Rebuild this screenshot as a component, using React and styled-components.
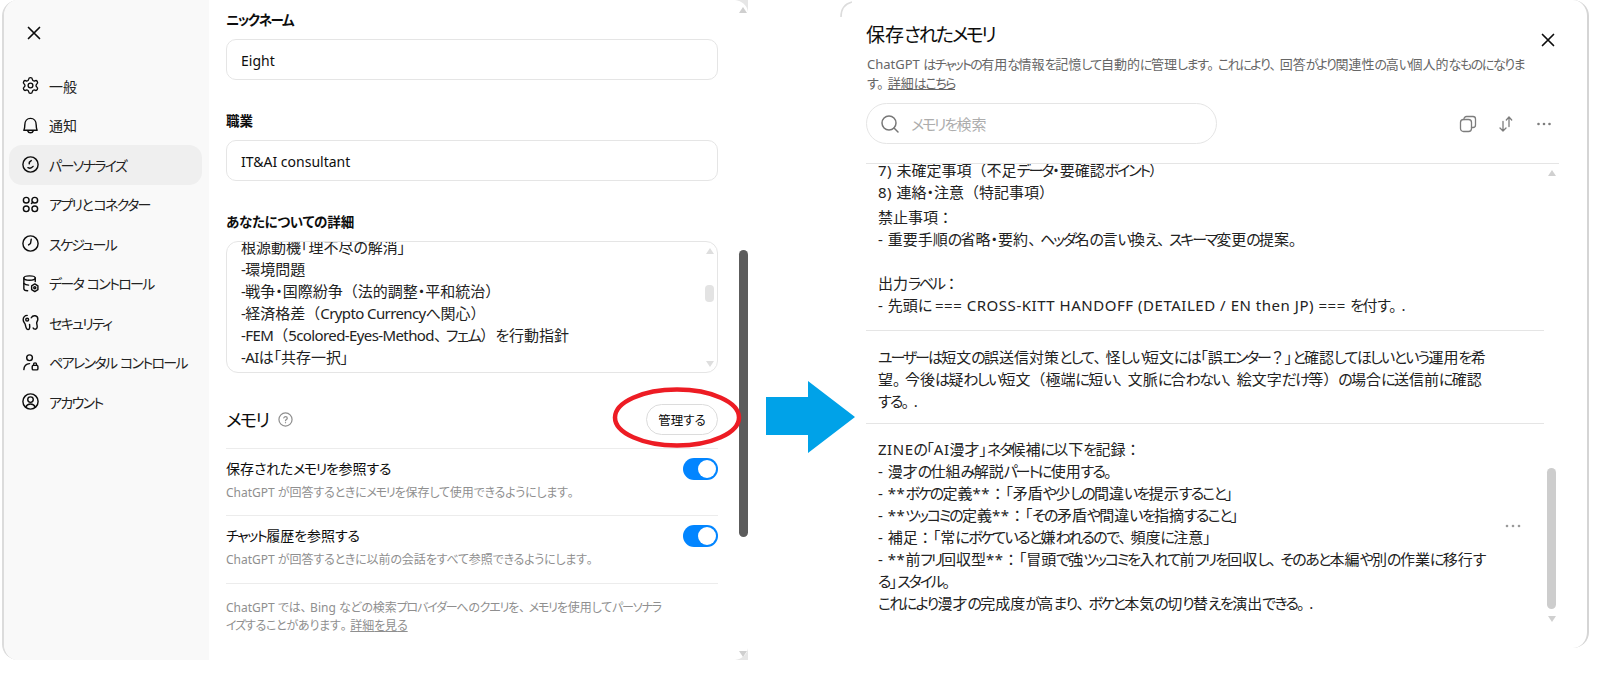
import React from "react";
import styled, { createGlobalStyle } from "styled-components";
import { Settings } from "lucide-react";

const Global = createGlobalStyle`
  html, body { margin: 0; padding: 0; background: #fff; }
  body {
    font-family: "Noto Sans", "Noto Sans CJK JP", sans-serif;
    font-feature-settings: "palt";
    color: #0d0d0d;
    overflow: hidden;
    --kata: -0.1em;
    --hira: -0.02em;
    --latin: 0;
  }
  * { box-sizing: border-box; }
`;

const Kata = styled.span`
  letter-spacing: var(--kata);
`;
const Hira = styled.span`
  letter-spacing: var(--hira);
`;
const Latin = styled.span`
  letter-spacing: var(--latin);
`;
const Punct = styled.span`
  font-feature-settings: normal;
`;
const Comma = styled(Punct)`
  letter-spacing: -0.2em;
`;

const Rich = ({ children }) =>
  children
    .split(/([\u30A0-\u30FA\u30FC-\u30FF]+|[\u3040-\u309F]+|[（）：？]+|[、。]+|[\x20-\x7E]+)/)
    .filter(Boolean)
    .map((run, i) => {
      if (/^[\u30A0-\u30FA\u30FC-\u30FF]/.test(run)) return <Kata key={i}>{run}</Kata>;
      if (/^[\u3040-\u309F]/.test(run)) return <Hira key={i}>{run}</Hira>;
      if (/^[（）：？]/.test(run)) return <Punct key={i}>{run}</Punct>;
      if (/^[、。]/.test(run)) return <Comma key={i}>{run}</Comma>;
      if (/^[\x20-\x7E]/.test(run)) return <Latin key={i}>{run}</Latin>;
      return <span key={i}>{run}</span>;
    });

const Line = styled.div`
  min-height: 22px;
  white-space: pre;
`;

const Lines = ({ children }) =>
  children.split("\n").map((line, i) => (
    <Line key={i}>
      <Rich>{line}</Rich>
    </Line>
  ));

const Page = styled.div`
  position: relative;
  display: flex;
  align-items: flex-start;
  width: 1600px;
  height: 700px;
  padding-left: 2px;
`;

const SettingsPanel = styled.section`
  display: flex;
  width: 746px;
  height: 660px;
  border-left: 2px solid #dcdcdc;
  border-radius: 16px 0 0 16px;
  overflow: hidden;
`;

const Sidebar = styled.nav`
  width: 205px;
  flex: none;
  background: #f9f9f9;
  padding: 24px 7px 0 5px;
  --kata: -0.12em;
`;

const CloseButton = styled.svg`
  display: block;
  width: 18px;
  height: 18px;
  fill: none;
  stroke: #0d0d0d;
  stroke-width: 1.7;
  stroke-linecap: round;
  flex: none;
`;

const SidebarClose = styled(CloseButton)`
  margin: 0 0 24px 16px;
`;

const NavRow = styled.div`
  display: flex;
  align-items: center;
  gap: 9px;
  height: 39.5px;
  padding-left: 12px;
  border-radius: 13px;
  font-size: 14px;
  white-space: pre;
  color: #222;
  background: ${(p) => (p.$active ? "#efefef" : "transparent")};
`;

const NavIcon = styled.svg`
  width: 19px;
  height: 19px;
  flex: none;
  fill: none;
  stroke: #0d0d0d;
  stroke-width: 1.5;
  stroke-linecap: round;
  stroke-linejoin: round;
`;

const Main = styled.main`
  flex: 1;
  padding: 10px 20px 0 17px;
  background: #fff;
  min-width: 0;
`;

const Label = styled.div`
  font-size: 13.5px;
  font-weight: 700;
  line-height: 20px;
  margin-bottom: 9px;
`;

const Field = styled.div`
  height: 41px;
  border: 1px solid #e5e5e5;
  border-radius: 10px;
  padding: 0 14px;
  font-size: 14px;
  line-height: 41px;
  margin-bottom: 31px;
`;

const TextArea = styled.div`
  display: flex;
  justify-content: space-between;
  height: 132px;
  border: 1px solid #e5e5e5;
  border-radius: 12px;
  padding: 0 3px 0 14px;
  overflow: hidden;
  margin-bottom: 31px;
`;

const TextAreaBody = styled.div`
  margin-top: -6px;
  font-size: 15px;
  line-height: 22px;
  color: #222;
  --latin: -0.04em;
`;

const TextScroll = styled.div`
  width: 9px;
  display: flex;
  flex-direction: column;
  align-items: center;
  padding: 6px 0 5px;
`;

const ArrowUp = styled.div`
  width: 0;
  height: 0;
  border-left: 4.5px solid transparent;
  border-right: 4.5px solid transparent;
  border-bottom: 6px solid ${(p) => p.$color || "#dedede"};
`;

const ArrowDown = styled(ArrowUp)`
  border-bottom: 0;
  border-top: 6px solid ${(p) => p.$color || "#dedede"};
`;

const SmallThumb = styled.div`
  width: 9px;
  height: 17px;
  margin: 31px 0 auto;
  background: #e3e3e3;
  border-radius: 4px;
`;

const MemoryHead = styled.div`
  display: flex;
  align-items: center;
  height: 31px;
  margin-bottom: 13px;
`;

const MemoryTitle = styled.h2`
  margin: 0;
  font-size: 18px;
  font-weight: 400;
  line-height: 26px;
`;

const HelpIcon = styled.svg`
  width: 15px;
  height: 15px;
  margin-left: 10px;
  fill: none;
  stroke: #8f8f8f;
  stroke-width: 1.3;
  stroke-linecap: round;
`;

const ManageButton = styled.button`
  margin-left: auto;
  width: 72px;
  height: 31px;
  padding: 0;
  border: 1px solid #dcdcdc;
  border-radius: 16px;
  background: #fff;
  color: #0d0d0d;
  font: inherit;
  font-size: 12.5px;
  font-feature-settings: "palt";
`;

const SettingRow = styled.div`
  display: flex;
  justify-content: space-between;
  align-items: flex-start;
  height: 67.3px;
  padding-top: 9px;
  border-top: 1px solid #ececec;
`;

const RowTitle = styled.div`
  font-size: 14px;
  line-height: 20px;
  margin-top: 1px;
  margin-bottom: 5px;
`;

const RowSub = styled.div`
  font-size: 12px;
  line-height: 18px;
  color: #8f8f8f;
`;

const Toggle = styled.div`
  display: flex;
  justify-content: flex-end;
  align-items: center;
  width: 35px;
  height: 22px;
  padding: 2px;
  border-radius: 11px;
  background: #0285ff;
`;

const Knob = styled.div`
  width: 18px;
  height: 18px;
  border-radius: 50%;
  background: #fff;
`;

const Footer = styled.div`
  border-top: 1px solid #ececec;
  padding-top: 15px;
  font-size: 12px;
  line-height: 18px;
  color: #8f8f8f;
`;

const FooterLine = styled.div`
  white-space: pre;
`;

const Link = styled.span`
  text-decoration: underline;
`;

const PageScroll = styled.div`
  position: relative;
  isolation: isolate;
  width: 10px;
  flex: none;
  background: #fff;
  display: flex;
  flex-direction: column;
  align-items: center;
  padding-top: 7px;
`;

const PageThumb = styled.div`
  width: 9px;
  height: 287px;
  margin-top: 237px;
  background: #5c5c5c;
  border-radius: 5px;
`;

const PageArrowDown = styled(ArrowDown)`
  margin-top: auto;
  margin-bottom: 3px;
`;

const ScrollCorner = styled.svg`
  position: absolute;
  z-index: -1;
  right: 0;
  width: 13px;
  height: 12px;
  fill: #e6e6e6;
  top: ${(p) => (p.$bottom ? "auto" : "0")};
  bottom: ${(p) => (p.$bottom ? "0" : "auto")};
`;

const MemoryPanel = styled.section`
  position: relative;
  width: 749px;
  height: 648px;
  margin-left: 92px;
  padding: 22px 28px 0 26px;
  border-right: 2px solid #d5d5d5;
  border-radius: 0 16px 16px 0;
  overflow: hidden;
  --kata: -0.14em;
  --hira: -0.11em;
`;

const CornerMark = styled.svg`
  position: absolute;
  left: 0;
  top: 1px;
  width: 12px;
  height: 16px;
  fill: none;
  stroke: #dcdcdc;
  stroke-width: 1.6;
`;

const TitleRow = styled.div`
  display: flex;
  justify-content: space-between;
  align-items: flex-start;
  padding-right: 2px;
`;

const Title = styled.h1`
  margin: 0;
  font-size: 19px;
  font-weight: 400;
  line-height: 26px;
`;

const PanelClose = styled(CloseButton)`
  margin-top: 9px;
`;

const Lead = styled.div`
  margin: 6px 0 11px;
  font-size: 13px;
  line-height: 18.5px;
  color: #666;
  padding-left: 1px;
`;

const LeadLine = styled.div`
  white-space: pre;
`;

const Toolbar = styled.div`
  display: flex;
  align-items: center;
  height: 41px;
  margin-bottom: 19px;
  padding-right: 6px;
`;

const SearchBox = styled.div`
  display: flex;
  align-items: center;
  gap: 11px;
  width: 351px;
  height: 41px;
  padding-left: 13px;
  border: 1px solid #e5e5e5;
  border-radius: 21px;
  font-size: 15px;
  color: #adadad;
`;

const SearchIcon = styled.svg`
  width: 20px;
  height: 20px;
  fill: none;
  stroke: #777;
  stroke-width: 1.5;
  stroke-linecap: round;
`;

const ToolIcons = styled.div`
  margin-left: auto;
  display: flex;
  align-items: center;
  gap: 20px;
  color: #777;
`;

const ToolIcon = styled.svg`
  width: 18px;
  height: 18px;
  fill: none;
  stroke: #7d7d7d;
  stroke-width: 1.3;
  stroke-linecap: round;
  stroke-linejoin: round;
`;

const DotsIcon = styled(ToolIcon)`
  stroke: none;
  fill: #7d7d7d;
`;

const MemoryList = styled.div`
  display: flex;
  height: 485px;
  border-top: 1px solid #e5e5e5;
  overflow: hidden;
`;

const Items = styled.div`
  width: 678px;
  flex: none;
  margin-top: -5px;
`;

const Item = styled.div`
  display: flex;
  align-items: center;
  justify-content: space-between;
  padding: ${(p) => p.$pad};
  border-bottom: ${(p) => (p.$last ? "0" : "1px solid #e5e5e5")};
`;

const ItemText = styled.div`
  font-size: 15px;
  line-height: 22px;
  color: #222;
  --latin: 0.035em;
`;

const Para = styled.div`
  margin-top: ${(p) => p.$gap || 0}px;
`;

const ItemDots = styled.svg`
  width: 18px;
  height: 6px;
  margin-right: 22px;
  fill: #9a9a9a;
`;

const ListScroll = styled.div`
  width: 9px;
  margin-left: 3px;
  display: flex;
  flex-direction: column;
  align-items: center;
  padding-top: 6px;
`;

const ListThumb = styled.div`
  width: 9px;
  height: 141px;
  margin-top: 292px;
  background: #cdcdcd;
  border-radius: 5px;
`;

const ListArrowDown = styled(ArrowDown)`
  margin-top: 7px;
`;

const Ring = styled.svg`
  position: absolute;
  left: 612px;
  top: 386px;
  width: 130px;
  height: 63px;
  fill: none;
  stroke: #ed1c24;
  stroke-width: 4.5;
  pointer-events: none;
`;

const BlueArrow = styled.svg`
  position: absolute;
  left: 766px;
  top: 381px;
  width: 90px;
  height: 72px;
  fill: #00a2e8;
`;

const navItems = [
  ["一般", "gear"], ["通知", "bell"], ["パーソナライズ", "smile"], ["アプリとコネクター", "apps"],
  ["スケジュール", "clock"], ["データ コントロール", "data"], ["セキュリティ", "key"],
  ["ペアレンタル コントロール", "parent"], ["アカウント", "user"],
];

const paths = {
  bell: <><path d="M3 15h14c-.8-1.6-1-3.2-1-5.5C16 5.4 13.500 2.500 10 2.500S4 5.400 4 9.500C4 11.800 3.800 13.400 3 15Z" /><path d="M7 15.500c.5 1.500 1.600 2.200 3 2.200s2.500-.7 3-2.200" /></>,
  smile: <><circle cx="10" cy="10" r="8" /><path d="M10.800 5.800C9.300 6.600 8.300 8 8.700 9.300" /><path d="M7.300 13.300c1.800.9 3.900.6 5.400-1.300" /></>,
  apps: <><circle cx="5.500" cy="5.500" r="3" /><circle cx="14.500" cy="5.500" r="3" /><circle cx="5.500" cy="14.500" r="3" /><circle cx="14.500" cy="14.500" r="3" /><path d="M12.500 7.500 11 9" /></>,
  clock: <><circle cx="10" cy="10" r="8" /><path d="M10.800 5.500 10 10 8 11.500" /></>,
  data: <><ellipse cx="9" cy="4.300" rx="6" ry="2.300" /><path d="M3 4.300V15.500C3 16.800 4.500 17.500 7 17.600" /><path d="M15 4.300V8" /><path d="M3 10c1.200 1.200 3 1.700 5 1.700" /><path d="M14.500 10.500l3.300 2v4l-3.300 2-3.300-2v-4Z" /><circle cx="14.500" cy="14.500" r="1.100" /></>,
  key: <><path d="M6.500 2.500C4 2.500 2.300 4.500 2.300 7c0 2.500 1.700 3.500 2.200 5.200.5 2 1 5.300 3 5.300S9.300 14 9 12" /><circle cx="6.500" cy="7" r="1.500" /><path d="M10.800 5c1.800-3.300 6.900-2.800 6.900 1.500 0 2.100-1.500 2.700-1.200 4.500.3 1.900 1.200 3.300.2 5-.9 1.500-3.200 1.300-3.900-.3" /></>,
  parent: <><circle cx="9" cy="5" r="3" /><path d="M3 17.500c.3-3.800 2.500-6.200 6-6.300" /><rect x="11.800" y="13" width="6" height="4.800" rx="1.200" /><path d="M13.200 13v-1a1.600 1.600 0 0 1 3.200 0v1" /></>,
  user: <><circle cx="10" cy="10" r="8" /><circle cx="10" cy="8" r="2.900" /><path d="M5 16c1-2.500 3-3.300 5-3.300s4 .8 5 3.300" /></>,
};

const Nav = ({ icon }) =>
  icon === "gear" ? (
    <Settings size={19} strokeWidth={1.7} color="#0d0d0d" />
  ) : (
    <NavIcon viewBox="0 0 20 20">{paths[icon]}</NavIcon>
  );

const Switch = () => (
  <Toggle>
    <Knob />
  </Toggle>
);

const XMark = ({ as: C }) => (
  <C viewBox="0 0 18 18">
    <path d="M3.500 3.500 14.500 14.500M14.500 3.500 3.500 14.500" />
  </C>
);

export default function App() {
  return (
    <Page>
      <Global />
      <SettingsPanel>
        <Sidebar>
          <XMark as={SidebarClose} />
          {navItems.map(([label, icon]) => (
            <NavRow key={label} $active={icon === "smile"}>
              <Nav icon={icon} />
              <span><Rich>{label}</Rich></span>
            </NavRow>
          ))}
        </Sidebar>
        <Main>
          <Label><Rich>ニックネーム</Rich></Label>
          <Field>Eight</Field>
          <Label>職業</Label>
          <Field>IT&amp;AI consultant</Field>
          <Label><Rich>あなたについての詳細</Rich></Label>
          <TextArea>
            <TextAreaBody>
              <Lines>
                {"根源動機「理不尽の解消」\n-環境問題\n-戦争・国際紛争（法的調整・平和統治）\n-経済格差（Crypto Currencyへ関心）\n-FEM（5colored-Eyes-Method、フェム）を行動指針\n-AIは「共存一択」"}
              </Lines>
            </TextAreaBody>
            <TextScroll>
              <ArrowUp />
              <SmallThumb />
              <ArrowDown />
            </TextScroll>
          </TextArea>
          <MemoryHead>
            <MemoryTitle><Rich>メモリ</Rich></MemoryTitle>
            <HelpIcon viewBox="0 0 16 16">
              <circle cx="8" cy="8" r="7" />
              <path d="M6.200 6.300A1.900 1.900 0 0 1 8 5c1.100 0 1.900.7 1.900 1.600 0 1.300-1.900 1.400-1.900 2.700" />
              <path d="M8 11.300v.1" />
            </HelpIcon>
            <ManageButton>管理する</ManageButton>
          </MemoryHead>
          <SettingRow>
            <div>
              <RowTitle><Rich>保存されたメモリを参照する</Rich></RowTitle>
              <RowSub><Rich>ChatGPT が回答するときにメモリを保存して使用できるようにします。</Rich></RowSub>
            </div>
            <Switch />
          </SettingRow>
          <SettingRow>
            <div>
              <RowTitle><Rich>チャット履歴を参照する</Rich></RowTitle>
              <RowSub><Rich>ChatGPT が回答するときに以前の会話をすべて参照できるようにします。</Rich></RowSub>
            </div>
            <Switch />
          </SettingRow>
          <Footer>
            <FooterLine><Rich>ChatGPT では、Bing などの検索プロバイダーへのクエリを、メモリを使用してパーソナラ</Rich></FooterLine>
            <FooterLine><Rich>イズすることがあります。</Rich><Link><Rich>詳細を見る</Rich></Link></FooterLine>
          </Footer>
        </Main>
        <PageScroll>
          <ScrollCorner viewBox="0 0 13 12"><path d="M0 0H13V12C12 5 7 1 0 0Z" /></ScrollCorner>
          <ArrowUp $color="#cfcfcf" />
          <PageThumb />
          <PageArrowDown $color="#cfcfcf" />
          <ScrollCorner $bottom viewBox="0 0 13 12"><path d="M0 12H13V0C12 7 7 11 0 12Z" /></ScrollCorner>
        </PageScroll>
      </SettingsPanel>

      <MemoryPanel>
        <CornerMark viewBox="0 0 12 16">
          <path d="M1 16C1 8 4 3 12 1" />
        </CornerMark>
        <TitleRow>
          <Title><Rich>保存されたメモリ</Rich></Title>
          <XMark as={PanelClose} />
        </TitleRow>
        <Lead>
          <LeadLine><Rich>ChatGPT はチャットの有用な情報を記憶して自動的に管理します。これにより、回答がより関連性の高い個人的なものになりま</Rich></LeadLine>
          <LeadLine><Rich>す。</Rich><Link><Rich>詳細はこちら</Rich></Link></LeadLine>
        </Lead>
        <Toolbar>
          <SearchBox>
            <SearchIcon viewBox="0 0 20 20">
              <circle cx="9" cy="9" r="7" />
              <path d="M14 14l4 4" />
            </SearchIcon>
            <span><Rich>メモリを検索</Rich></span>
          </SearchBox>
          <ToolIcons>
            <ToolIcon viewBox="0 0 18 18">
              <rect x="1.500" y="4.500" width="11" height="12" rx="3" />
              <path d="M5 4.500V4a2.500 2.500 0 0 1 2.500-2.500h6.500A2.500 2.500 0 0 1 16.500 4v6a2.500 2.500 0 0 1-2.500 2.500h-1.500" />
            </ToolIcon>
            <ToolIcon viewBox="0 0 18 18">
              <path d="M6 6.500V16M3 13l3 3 3-3" />
              <path d="M12 11.500V2M9.300 5 12 2l2.700 3" />
            </ToolIcon>
            <DotsIcon viewBox="0 0 18 18">
              <circle cx="3.500" cy="9" r="1.300" />
              <circle cx="9" cy="9" r="1.300" />
              <circle cx="14.500" cy="9" r="1.300" />
            </DotsIcon>
          </ToolIcons>
        </Toolbar>
        <MemoryList>
          <Items>
            <Item $pad="0 0 14px 12px">
              <ItemText>
                <Para><Lines>{"7) 未確定事項（不足データ・要確認ポイント）\n8) 連絡・注意（特記事項）"}</Lines></Para>
                <Para $gap={3}><Lines>{"禁止事項：\n- 重要手順の省略・要約、ヘッダ名の言い換え、スキーマ変更の提案。\n\n出力ラベル：\n- 先頭に === CROSS-KITT HANDOFF (DETAILED / EN then JP) === を付す。."}</Lines></Para>
              </ItemText>
            </Item>
            <Item $pad="15px 0 11px 12px">
              <ItemText>
                <Lines>{"ユーザーは短文の誤送信対策として、怪しい短文には「誤エンター？」と確認してほしいという運用を希\n望。今後は疑わしい短文（極端に短い、文脈に合わない、絵文字だけ等）の場合に送信前に確認\nする。."}</Lines>
              </ItemText>
            </Item>
            <Item $pad="14px 0 12px 12px" $last>
              <ItemText>
                <Lines>{"ZINEの「AI漫才」ネタ候補に以下を記録：\n- 漫才の仕組み解説パートに使用する。\n- **ボケの定義**：「矛盾や少しの間違いを提示すること」\n- **ツッコミの定義**：「その矛盾や間違いを指摘すること」\n- 補足：「常にボケていると嫌われるので、頻度に注意」\n- **前フリ回収型**：「冒頭で強ツッコミを入れて前フリを回収し、そのあと本編や別の作業に移行す\nる」スタイル。\nこれにより漫才の完成度が高まり、ボケと本気の切り替えを演出できる。."}</Lines>
              </ItemText>
              <ItemDots viewBox="0 0 18 6">
                <circle cx="3" cy="3" r="1.300" />
                <circle cx="9" cy="3" r="1.300" />
                <circle cx="15" cy="3" r="1.300" />
              </ItemDots>
            </Item>
          </Items>
          <ListScroll>
            <ArrowUp $color="#d0d0d0" />
            <ListThumb />
            <ListArrowDown $color="#d0d0d0" />
          </ListScroll>
        </MemoryList>
      </MemoryPanel>

      <Ring viewBox="0 0 130 63">
        <ellipse cx="65" cy="31.500" rx="62" ry="28" />
      </Ring>
      <BlueArrow viewBox="0 0 90 72">
        <path d="M0 16H42V0L89 36 42 72V54H0Z" />
      </BlueArrow>
    </Page>
  );
}
